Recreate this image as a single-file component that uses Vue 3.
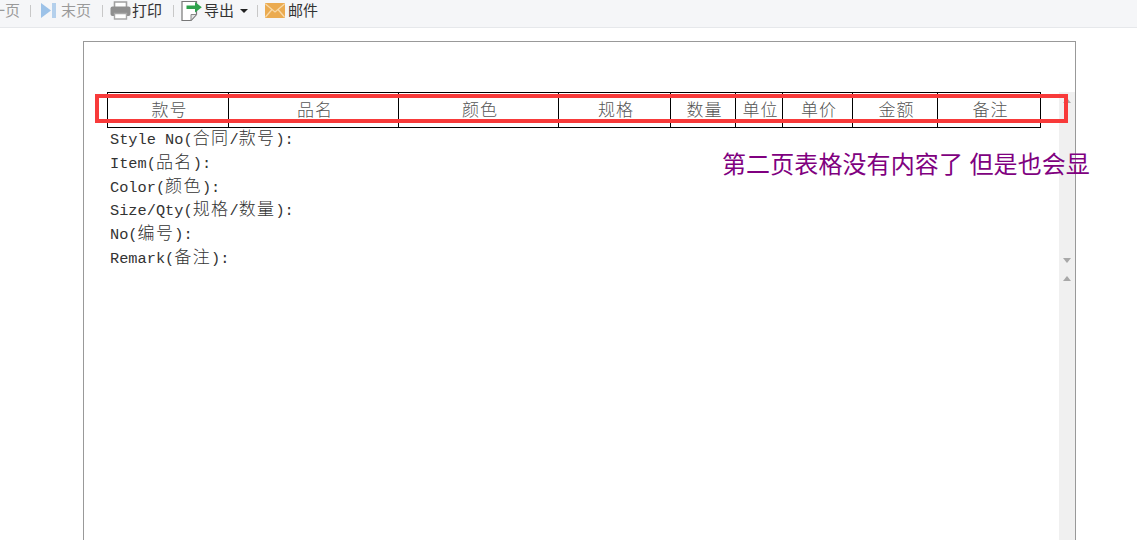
<script setup>
const columns = [
  { label: '款号', width: 121 },
  { label: '品名', width: 170 },
  { label: '颜色', width: 160 },
  { label: '规格', width: 112 },
  { label: '数量', width: 65 },
  { label: '单位', width: 47 },
  { label: '单价', width: 70 },
  { label: '金额', width: 85 },
  { label: '备注', width: 103 },
]
const lines = [
  ['Style No(', '合同', '/', '款号', '):'],
  ['Item(', '品名', '):'],
  ['Color(', '颜色', '):'],
  ['Size/Qty(', '规格', '/', '数量', '):'],
  ['No(', '编号', '):'],
  ['Remark(', '备注', '):'],
]
const isCjk = (s) => /[\u4e00-\u9fff]/.test(s)
</script>

<template>
  <div class="screen">
    <header class="toolbar">
      <span class="tb-text muted cut">一页</span>
      <i class="sep s1"></i>
      <svg class="ic-last" width="16" height="17" viewBox="0 0 16 17">
        <path d="M0 1 L10 8.500 L0 16 Z" fill="#9cc2e8" />
        <rect x="11" y="1" width="4" height="15" fill="#b4d0ec" />
      </svg>
      <span class="tb-text muted">末页</span>
      <i class="sep s2"></i>
      <svg class="ic-print" width="21" height="19" viewBox="0 0 21 19">
        <path d="M4.500 6V1h12v5" fill="#fff" stroke="#a0a0a0" stroke-width="1.600" />
        <rect x="0.500" y="5.500" width="20" height="9.500" rx="2" fill="#8f8f8f" />
        <path d="M4.500 12.500v5.500h12v-5.500z" fill="#fff" stroke="#a8a8a8" stroke-width="1.400" />
      </svg>
      <span class="tb-text">打印</span>
      <i class="sep s3"></i>
      <svg class="ic-export" width="21" height="21" viewBox="0 0 21 21">
        <path d="M1 1.500H15.500V14.500L10 20.500H1Z" fill="#fff" stroke="#777" stroke-width="1.200" />
        <path d="M10 20.500V14.500H15.500Z" fill="#e2e2e2" stroke="#888" stroke-width="1" />
        <path d="M5.500 5.500H14V2L20.800 7.200 14 12.500V9H5.500Z" fill="#2ea24c" />
      </svg>
      <span class="tb-text">导出</span>
      <i class="caret"></i>
      <i class="sep s4"></i>
      <svg class="ic-mail" width="20" height="15" viewBox="0 0 20 15">
        <rect width="20" height="15" rx="1" fill="#ebab50" />
        <path d="M0.500 1 L10 9 L19.500 1 M0.500 14 L7 6.500 M19.500 14 L13 6.500" fill="none" stroke="#f8d9a8" stroke-width="1.300" />
      </svg>
      <span class="tb-text">邮件</span>
    </header>

    <main class="workspace">
      <section class="page">
        <div class="sheet">
          <table class="grid">
            <colgroup>
              <col v-for="c in columns" :key="c.label" :style="{ width: c.width + 'px' }" />
            </colgroup>
            <tbody>
              <tr>
                <td v-for="c in columns" :key="c.label">{{ c.label }}</td>
              </tr>
            </tbody>
          </table>
          <div class="lines">
            <div v-for="(line, i) in lines" :key="i" class="line">
              <span v-for="(part, j) in line" :key="j" :class="{ cjk: isCjk(part) }">{{ part }}</span>
            </div>
          </div>
        </div>
        <div class="scrollbar">
          <i class="arrow up first"></i>
          <i class="arrow down"></i>
          <i class="arrow up second"></i>
        </div>
      </section>
      <div class="highlight"></div>
      <p class="note">第二页表格没有内容了 但是也会显</p>
    </main>
  </div>
</template>

<style>
html, body { margin: 0; background: #fff; overflow: hidden; }
</style>

<style scoped>
.screen {
  width: 1137px;
  height: 540px;
  overflow: hidden;
  background: #fff;
  font-family: "Liberation Sans", "Noto Sans CJK SC", sans-serif;
}
.toolbar {
  box-sizing: border-box;
  height: 28px;
  background: #f5f6f8;
  border-bottom: 1px solid #e6e8eb;
  display: flex;
  align-items: center;
  padding-bottom: 6px;
  overflow: hidden;
}
.tb-text {
  font-size: 15px;
  line-height: 20px;
  color: #333;
  white-space: nowrap;
  flex: none;
}
.muted { color: #9a9a9a; }
.cut { margin-left: -10px; width: 30px; }
.sep { width: 1px; height: 12px; background: #c8c8c8; flex: none; }
.s1 { margin-left: 10px; }
.ic-last { margin-left: 10px; flex: none; }
.ic-last + .tb-text { margin-left: 4px; }
.s2 { margin-left: 11px; }
.ic-print { margin-left: 7px; flex: none; }
.ic-print + .tb-text { margin-left: 1px; }
.s3 { margin-left: 11px; }
.ic-export { margin-left: 7px; flex: none; }
.ic-export + .tb-text { margin-left: 2px; }
.caret {
  margin-left: 6px;
  flex: none;
  width: 0;
  height: 0;
  border-left: 4px solid transparent;
  border-right: 4px solid transparent;
  border-top: 4px solid #222;
}
.s4 { margin-left: 9px; }
.ic-mail { margin-left: 7px; flex: none; }
.ic-mail + .tb-text { margin-left: 3px; }

.workspace {
  position: relative;
  height: 512px;
  padding: 13px 0 0 83px;
  box-sizing: border-box;
}
.page {
  box-sizing: border-box;
  width: 993px;
  height: 520px;
  border: 1px solid #999;
  border-bottom: 0;
  display: flex;
}
.sheet {
  width: 975px;
  flex: none;
  padding: 50px 0 0 23px;
  box-sizing: border-box;
}
.grid {
  border-collapse: collapse;
  table-layout: fixed;
  width: 933px;
}
.grid td {
  border: 1px solid #000;
  height: 34px;
  padding: 0 0 0 3px;
  vertical-align: top;
  text-align: center;
  font-size: 17px;
  line-height: 32px;
  color: #555;
  letter-spacing: 1px;
  font-family: "Noto Sans CJK SC", sans-serif;
  font-weight: 300;
}
.lines {
  padding: 0 0 0 3px;
  font-family: "Liberation Mono", "Noto Sans CJK SC", monospace;
  font-size: 15.300px;
  color: #333;
}
.line {
  height: 17px;
  line-height: 17px;
  margin-bottom: 6.800px;
  white-space: nowrap;
}
.cjk {
  font-family: "Noto Sans CJK SC", sans-serif;
  font-size: 17px;
  letter-spacing: 1.400px;
  font-weight: 300;
}
.scrollbar {
  position: relative;
  width: 16px;
  flex: none;
  margin-top: 50px;
  background: #f0f0f0;
}
.arrow {
  position: absolute;
  left: 4px;
  width: 0;
  height: 0;
  border-left: 4px solid transparent;
  border-right: 4px solid transparent;
}
.arrow.up { border-bottom: 5px solid #a8a8a8; }
.arrow.down { border-top: 5px solid #a8a8a8; top: 166px; }
.arrow.first { top: 6px; }
.arrow.second { top: 184px; }
.highlight {
  position: absolute;
  left: 95px;
  top: 66px;
  width: 965px;
  height: 21px;
  border: 4px solid #f83a3a;
}
.note {
  position: absolute;
  left: 722px;
  top: 119px;
  margin: 0;
  font-size: 24px;
  line-height: 32px;
  letter-spacing: 0.100px;
  word-spacing: 1px;
  color: #800080;
  white-space: nowrap;
  font-family: "Noto Sans CJK SC", sans-serif;
}
</style>
